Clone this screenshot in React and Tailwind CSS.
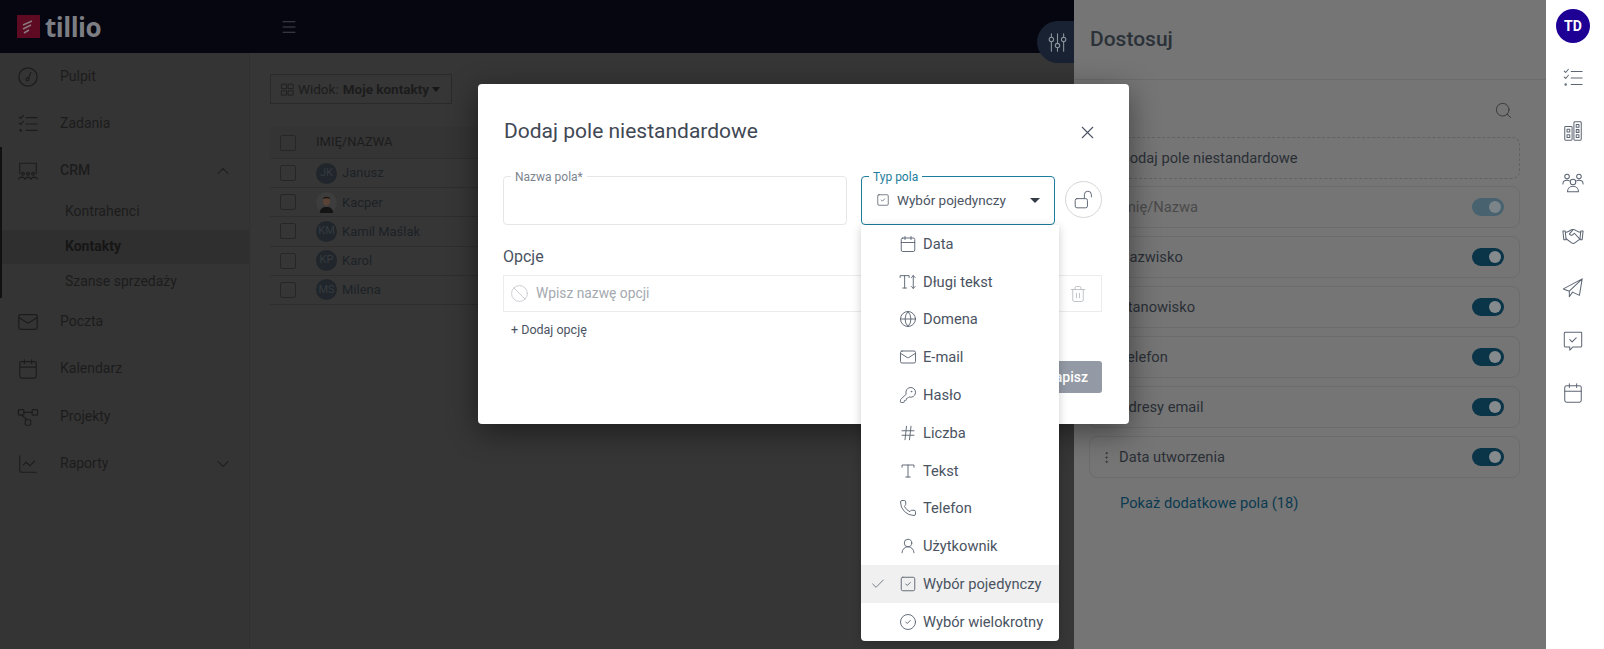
import React from 'react';
import { Calendar, Globe, Mail, KeyRound, Hash, Phone, UserRound, SquareCheck, CircleCheck, Trash2, Ban, Search, X, ChevronUp, ChevronDown, Menu, ChartLine, Check, EllipsisVertical } from 'lucide-react';

const S = ({ size = 20, children, className = '', sw = 1.25 }) => (
  <svg width={size} height={size} viewBox="0 0 24 24" fill="none" stroke="currentColor" strokeWidth={sw} strokeLinecap="round" strokeLinejoin="round" className={className}>{children}</svg>
);
const Gauge2 = (p) => <S {...p}><circle cx="12" cy="12" r="10" /><path d="M15 7l-2.5 6.5" /><circle cx="11.5" cy="14.5" r="1.6" /></S>;
const Board = (p) => <S {...p}><path d="M3 15V3.5h18V15" /><circle cx="6.5" cy="15" r="1.5" /><circle cx="12" cy="15" r="1.5" /><circle cx="17.5" cy="15" r="1.5" /><path d="M2 21c.5-3 6-3 6.5 0M9 21c.5-3 5.500-3 6 0M15.500 21c.5-3 6-3 6.500 0" /></S>;
const Flow = (p) => <S {...p}><rect x="1.500" y="4" width="6" height="6" rx="1" /><rect x="16.500" y="4" width="6" height="6" rx="1" /><rect x="9" y="15" width="6" height="6" rx="1" /><path d="M7.500 7h9M5 10l6 5" /></S>;
const TypeT = (p) => <S {...p}><path d="M4 7V4h16v3M12 4v16M9 20h6" /></S>;
const LongT = (p) => <S {...p}><path d="M1.500 6V3.500h12V6M7.500 3.500V20M5 20h5" /><path d="M19 3.500v17M16.500 6L19 3.500 21.500 6M16.500 18l2.500 2.500 2.500-2.500" /></S>;
const Tiles = (p) => <S {...p}><rect x="3" y="3.500" width="7.500" height="7" /><rect x="13.500" y="3.500" width="7.500" height="7" /><rect x="3" y="14" width="7.500" height="7" /><rect x="13.500" y="14" width="7.500" height="7" /></S>;
const Buildings = (p) => <S {...p}><rect x="3" y="7" width="8" height="15" rx="1" /><rect x="13" y="2" width="8" height="20" rx="1" /><rect x="5.500" y="10" width="3" height="3" /><rect x="5.500" y="16" width="3" height="3" /><rect x="15.500" y="5" width="3" height="3" /><rect x="15.500" y="10.500" width="3" height="3" /><rect x="15.500" y="16" width="3" height="3" /></S>;
const People = (p) => <S {...p}><circle cx="5.500" cy="5" r="2.500" /><circle cx="18.500" cy="5" r="2.500" /><circle cx="12" cy="11" r="3" /><path d="M1 13c0-2.500 2-4 4.500-4 1 0 1.800.2 2.500.7M23 13c0-2.500-2-4-4.500-4-1 0-1.800.2-2.500.7" /><path d="M6 21.500c0-3.500 2.500-6 6-6s6 2.500 6 6z" /></S>;
const ChatCheck = (p) => <S {...p}><path d="M3.500 2.500h17a1 1 0 0 1 1 1v14a1 1 0 0 1-1 1H12l-3.500 3.500v-3.500h-5a1 1 0 0 1-1-1v-14a1 1 0 0 1 1-1z" /><path d="M8.500 10.500l2.500 2.500 4.500-4.500" /></S>;
const Tasks = (p) => <S {...p}><path d="M2.500 4.500l1.500 1.500 3-3.500M2.500 11l1.500 1.500 3-3.500" /><circle cx="4" cy="19" r=".8" /><path d="M10 5h12M10 12h12M10 19h12" /></S>;
const Knobs = (p) => <S {...p}><path d="M5 2v4M5 11v11M12 2v11M12 18v4M19 2v4M19 11v11" /><circle cx="5" cy="8.500" r="2.500" /><circle cx="12" cy="15.500" r="2.500" /><circle cx="19" cy="8.500" r="2.500" /></S>;
const OpenLock = (p) => <S {...p}><rect x="2.500" y="11" width="14" height="10.500" rx="2" /><path d="M13 11V6.500a4 4 0 0 1 8 0V9" /></S>;
const Shake = (p) => <S {...p}><path d="M1 6.500h2.500l1 9.500H2zM23 6.500h-2.500l-1 9.500H22z" /><path d="M4 8c3 0 5-3 8-3s5 3 8.500 3" /><path d="M12 5L8 10c1.500 1.500 3 1.500 4.500 0l1-1 6 6.500" /><path d="M4.500 15l6 4.500c1 .7 2.500.7 3.500 0l5.500-4" /></S>;
const Plane = (p) => <S {...p}><path d="M22 2L1.500 13l6.500 2.500L22 2l-3 18-7.500-3.500L8 21.500v-6" /></S>;

const nav = [
  { label: 'Pulpit', Icon: Gauge2 },
  { label: 'Zadania', Icon: Tasks },
  { label: 'CRM', Icon: Board, chev: 'up', bold: true },
];
const nav2 = [
  { label: 'Poczta', Icon: Mail },
  { label: 'Kalendarz', Icon: Calendar },
  { label: 'Projekty', Icon: Flow, push: true },
  { label: 'Raporty', Icon: ChartLine, chev: 'down' },
];

function NavItem({ label, Icon, chev, bold, push }) {
  return (
    <div className={`h-[47px] flex items-center pl-[17px] pr-[16px] text-[#1c1c1c] ${push ? 'mt-[1px]' : ''}`}>
      <span className="w-[43px] shrink-0"><Icon size={22} strokeWidth={1.25} sw={1.25} /></span>
      <span className={`flex-1 text-[14px] ${bold ? 'font-medium' : ''}`}>{label}</span>
      {chev === 'up' && <ChevronUp size={20} strokeWidth={1.25} />}
      {chev === 'down' && <ChevronDown size={20} strokeWidth={1.25} />}
    </div>
  );
}

const people = [
  { i: 'JK', n: 'Janusz' },
  { i: 'KP', n: 'Kacper', photo: true },
  { i: 'KM', n: 'Kamil Maślak' },
  { i: 'KP', n: 'Karol' },
  { i: 'MS', n: 'Milena' },
];

const Box = () => <span className="block w-[16px] h-[16px] border border-[#262626] rounded-[2px]" />;

function Row({ p }) {
  return (
    <div className="h-[29.2px] flex items-center border-b border-[#2e2e2e]">
      <span className="w-[46px] pl-[10px] shrink-0"><Box /></span>
      {p.photo ? (
        <svg width="21" height="21" viewBox="0 0 21 21" className="shrink-0">
          <circle cx="10.500" cy="10.500" r="10.500" fill="#3d3d3d" />
          <path d="M4 21c0-5 3-6 6.500-6s6.500 1 6.500 6z" fill="#141414" />
          <ellipse cx="10.500" cy="9" rx="3.500" ry="4.500" fill="#5a4336" />
          <path d="M7 7c0-3 7-3 7 0-2-1-5-1-7 0z" fill="#1a1410" />
        </svg>
      ) : (
        <span className="w-[21px] h-[21px] rounded-full bg-[#20262b] text-[#363b40] text-[11px] flex items-center justify-center shrink-0">{p.i}</span>
      )}
      <span className="ml-[5px] text-[13px] text-[#1c2226]">{p.n}</span>
    </div>
  );
}

const fields = ['Imię/Nazwa', 'Nazwisko', 'Stanowisko', 'Telefon', 'Adresy email', 'Data utworzenia'];

function Toggle({ muted }) {
  return (
    <span className={`w-[32px] h-[18px] rounded-full flex items-center justify-end pr-[3px] ${muted ? 'bg-[#48636f]' : 'bg-[#0a3448]'}`}>
      <span className={`w-[12px] h-[12px] rounded-full ${muted ? 'bg-[#7b8488]' : 'bg-[#858a8d]'}`} />
    </span>
  );
}

const options = [
  { l: 'Data', I: Calendar },
  { l: 'Długi tekst', I: LongT },
  { l: 'Domena', I: Globe },
  { l: 'E-mail', I: Mail },
  { l: 'Hasło', I: KeyRound },
  { l: 'Liczba', I: Hash },
  { l: 'Tekst', I: TypeT },
  { l: 'Telefon', I: Phone },
  { l: 'Użytkownik', I: UserRound },
  { l: 'Wybór pojedynczy', I: SquareCheck, sel: true },
  { l: 'Wybór wielokrotny', I: CircleCheck },
];

function Dropdown() {
  return (
    <div className="absolute -left-[1px] top-[48px] w-[198px] bg-white rounded-b-[4px] shadow-[0_2px_10px_rgba(0,0,0,0.2)] z-20">
      {options.map(({ l, I, sel }) => (
        <div key={l} className={`relative h-[37.8px] flex items-center pl-[38px] gap-[6px] text-[14.7px] text-[#4a5361] ${sel ? 'bg-[#f0f0f0]' : ''}`}>
          {sel && <Check size={16} strokeWidth={1.25} className="absolute left-[9px] text-[#5c6572]" />}
          <I size={18} strokeWidth={1.25} sw={1.25} className="shrink-0 text-[#5c6572]" />
          <span>{l}</span>
        </div>
      ))}
    </div>
  );
}

function Modal() {
  return (
    <div className="absolute left-[478px] top-[84px] w-[651px] h-[340px] bg-white rounded-[4px] shadow-[0_8px_30px_rgba(0,0,0,0.45)] pl-[25px] pr-[27px] pt-[32px] z-10">
      <div className="h-[32px] flex items-center justify-between">
        <span className="ml-[1px] text-[21px] text-[#3f4854]">Dodaj pole niestandardowe</span>
        <X size={21} strokeWidth={1.25} className="text-[#4a5361] mr-[4px]" />
      </div>
      <div className="mt-[28px] flex items-start">
        <div className="relative w-[344px] h-[49px] border border-[#e6e6e6] rounded-[4px]">
          <span className="absolute left-[7px] -top-[7px] bg-white px-[4px] text-[12px] leading-[14px] text-[#7c8590]">Nazwa pola*</span>
        </div>
        <div className="relative ml-[14px] w-[194px] h-[49px] border border-[#1d7d9c] rounded-[4px] flex items-center pl-[14px] pr-[14px] pb-[1px] text-[#4a5361]">
          <span className="absolute left-[7px] -top-[7px] bg-white px-[4px] text-[12px] leading-[14px] text-[#1d7d9c]">Typ pola</span>
          <SquareCheck size={14} strokeWidth={1.25} className="shrink-0" />
          <span className="ml-[7px] text-[13.5px] flex-1">Wybór pojedynczy</span>
          <span className="w-0 h-0 border-x-[5px] border-x-transparent border-t-[5px] border-t-[#333b47]" />
          <Dropdown />
        </div>
        <div className="ml-[10px] mt-[5px] w-[37px] h-[37px] rounded-full border border-[#d6d6d6] flex items-center justify-center text-[#5c6572]">
          <OpenLock size={21} sw={1.1} />
        </div>
      </div>
      <div className="mt-[22px] h-[20px] flex items-center text-[16px] text-[#4a5361]">Opcje</div>
      <div className="mt-[8px] h-[37px] border border-[#ececec] flex items-center pl-[6px] pr-[14px]">
        <Ban size={19} strokeWidth={1.1} className="text-[#c4c7cc]" />
        <span className="ml-[7px] text-[13.8px] text-[#a4a9b0] flex-1">Wpisz nazwę opcji</span>
        <Trash2 size={18} strokeWidth={1.1} className="text-[#b4b8be]" />
      </div>
      <div className="mt-[10px] h-[16px] pl-[8px] flex items-center text-[12.5px] text-[#4a5361]">+ Dodaj opcję</div>
      <div className="mt-[23px] flex justify-end">
        <span className="h-[32px] px-[14px] rounded-[3px] bg-[#939aa5] text-white text-[14px] font-medium flex items-center">Zapisz</span>
      </div>
    </div>
  );
}

export default function App() {
  return (
    <div className="relative w-[1604px] h-[649px] overflow-hidden flex font-['Roboto',sans-serif]">
      <div className="w-[1074px] flex flex-col shrink-0 bg-[#363636]">
        <header className="relative h-[53px] shrink-0 bg-[#05060f] flex items-center">
          <div className="w-[280px] pl-[17px] flex items-center">
            <svg width="23" height="23" viewBox="0 0 23 23">
              <rect width="23" height="23" fill="#5e0a22" />
              <path d="M6 10l9-4M6 14l8-4M7 18l5-3" stroke="#8a767c" strokeWidth="1.600" fill="none" />
            </svg>
            <span className="ml-[5px] text-[26px] leading-none font-bold text-[#7d7e84] font-['Open_Sans',sans-serif] tracking-[-0.5px]">tillio</span>
          </div>
          <Menu size={18} strokeWidth={1} className="text-[#5a5b63]" />
          <div className="absolute right-0 top-[21px] w-[37px] h-[42px] bg-[#182232] rounded-l-full flex items-center justify-end pr-[6px] z-[1]">
            <Knobs size={21} sw={1.25} className="text-[#8b929c]" />
          </div>
        </header>
        <div className="flex flex-1">
          <aside className="relative w-[250px] shrink-0 bg-[#343434] border-r border-[#303030]">
            <span className="absolute left-0 top-[94px] w-[1.5px] h-[151px] bg-[#111]" />
            {nav.map((n) => <NavItem key={n.label} {...n} />)}
            <div className="h-[35.5px] pl-[65px] flex items-center text-[14px] text-[#1c1c1c]">Kontrahenci</div>
            <div className="h-[34.5px] pl-[65px] flex items-center text-[14px] font-bold text-[#161616] bg-[#2f2f2f]">Kontakty</div>
            <div className="h-[34px] pl-[65px] flex items-center text-[14px] text-[#1c1c1c]">Szanse sprzedaży</div>
            {nav2.map((n) => <NavItem key={n.label} {...n} />)}
          </aside>
          <main className="flex-1 pl-[20px] pt-[21px]">
            <div className="w-[182px] h-[30px] border border-[#2a2a2a] flex items-center pl-[9px] text-[13.5px] text-[#1c1c1c]">
              <Tiles size={15} />
              <span className="ml-[3px]">Widok:</span>
              <span className="ml-[4px] font-bold">Moje kontakty</span>
              <span className="ml-[3px] w-0 h-0 border-x-[4px] border-x-transparent border-t-[5px] border-t-[#161616]" />
            </div>
            <div className="mt-[23px] w-[600px]">
              <div className="h-[32px] flex items-center bg-[#343434] border-b border-[#2e2e2e]">
                <span className="w-[46px] pl-[10px] shrink-0"><Box /></span>
                <span className="text-[13px] text-[#1c1c1c] pb-[2px]">IMIĘ/NAZWA</span>
              </div>
              {people.map((p) => <Row key={p.n} p={p} />)}
            </div>
          </main>
        </div>
      </div>

      <section className="w-[472px] shrink-0 bg-[#757575] flex flex-col">
        <div className="h-[80px] shrink-0 border-b border-[#6c6c6c] flex items-center pl-[16px] text-[21px] font-medium text-[#2b3138]">Dostosuj</div>
        <div className="h-[57px] shrink-0 flex items-center justify-end pr-[33px] pt-[4px] text-[#333]"><Search size={19} strokeWidth={1.1} /></div>
        <div className="ml-[15px] mr-[26px] h-[42px] border border-dashed border-[#626262] rounded-[8px] flex items-center pl-[30px] text-[14.7px] text-[#2a2f35]">Dodaj pole niestandardowe</div>
        <div className="mt-[7px] ml-[15px] mr-[26px] flex flex-col gap-[8px]">
          {fields.map((f, i) => (
            <div key={f} className="h-[42px] border border-[#6c6c6c] rounded-[8px] flex items-center pl-[9px] pr-[15px]">
              <EllipsisVertical size={15} strokeWidth={1.5} className="text-[#333] shrink-0" />
              <span className={`ml-[5px] flex-1 text-[14.7px] ${i === 0 ? 'text-[#4a4a4a]' : 'text-[#2a2f35]'}`}>{f}</span>
              <Toggle muted={i === 0} />
            </div>
          ))}
        </div>
        <div className="mt-[14px] pl-[46px] text-[14.7px] text-[#0b3a50]">Pokaż dodatkowe pola (18)</div>
      </section>

      <nav className="w-[58px] shrink-0 bg-white flex flex-col items-center pr-[4px] text-[#5c6572]">
        <span className="mt-[9px] w-[34px] h-[34px] rounded-full bg-[#1e0094] text-white text-[14px] font-bold flex items-center justify-center">TD</span>
        <div className="mt-[24px] flex flex-col items-center gap-[30.500px]">
          <Tasks size={22} sw={1.1} />
          <Buildings size={22} sw={1.1} />
          <People size={22} sw={1.1} />
          <Shake size={22} sw={1.1} />
          <Plane size={22} sw={1.1} />
          <ChatCheck size={22} sw={1.1} />
          <Calendar size={22} strokeWidth={1.1} />
        </div>
      </nav>

      <Modal />
    </div>
  );
}
